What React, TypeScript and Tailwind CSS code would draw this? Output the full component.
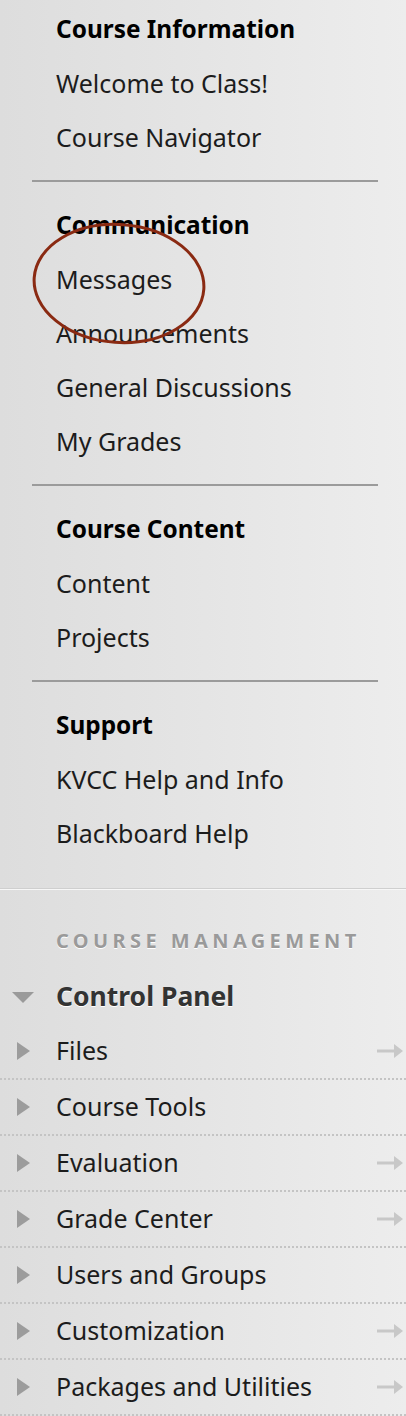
const sections = [
  { title: 'Course Information', items: ['Welcome to Class!', 'Course Navigator'] },
  { title: 'Communication', items: ['Messages', 'Announcements', 'General Discussions', 'My Grades'] },
  { title: 'Course Content', items: ['Content', 'Projects'] },
  { title: 'Support', items: ['KVCC Help and Info', 'Blackboard Help'] },
];

const panelRows = [
  { label: 'Files', arrow: true },
  { label: 'Course Tools', arrow: false },
  { label: 'Evaluation', arrow: true },
  { label: 'Grade Center', arrow: true },
  { label: 'Users and Groups', arrow: false },
  { label: 'Customization', arrow: true },
  { label: 'Packages and Utilities', arrow: true },
];

function RightArrow() {
  return (
    <svg width="26" height="14" viewBox="0 0 26 14" className="mr-[3px]">
      <line x1="0" y1="7" x2="19" y2="7" stroke="#c8c8c8" strokeWidth="3" />
      <polygon points="17,0 26,7 17,14" fill="#c8c8c8" />
    </svg>
  );
}

export default function App() {
  return (
    <div
      className="relative w-[406px] h-[1416px] overflow-hidden bg-gradient-to-r from-[#dddddd] to-[#ededed]"
      style={{ fontFamily: '"Noto Sans", "DejaVu Sans", sans-serif' }}
    >
      <div className="pt-[2px]">
        {sections.map((s, i) => (
          <div key={s.title}>
            {i > 0 && <div className="ml-8 mr-[28px] my-4 h-[2px] bg-[#9b9b9b]" />}
            <div className="pl-[56px]">
              <div className="h-[54px] leading-[54px] text-[24.4px] font-bold text-black">{s.title}</div>
              {s.items.map((it) => (
                <div key={it} className="h-[54px] leading-[54px] text-[25px] text-[#1c1c1c]">
                  {it}
                </div>
              ))}
            </div>
          </div>
        ))}
      </div>

      <div className="mt-[28px] h-[1px] bg-[#cfcfcf]" />
      <div className="border-t border-[#f7f7f7]" />

      <div className="pl-[56px] pt-[36px] h-[80px] text-[20px] font-bold tracking-[4.4px] text-[#9a9a9a] [text-shadow:0_1px_0_#fff]">
        COURSE MANAGEMENT
      </div>

      <div className="flex items-center h-[54px]">
        <div className="w-[56px] pl-[12px]">
          <div className="w-0 h-0 border-l-[11px] border-r-[11px] border-t-[11px] border-l-transparent border-r-transparent border-t-[#9a9a9a]" />
        </div>
        <div className="text-[26.5px] font-bold text-[#333] [text-shadow:0_1px_0_#fff]">Control Panel</div>
      </div>

      {panelRows.map((r) => (
        <div key={r.label} className="flex items-center h-[56px] border-b-2 border-dotted border-[#c4c4c4]">
          <div className="w-[56px] pl-[17px]">
            <div className="w-0 h-0 border-t-[9px] border-b-[9px] border-l-[13px] border-t-transparent border-b-transparent border-l-[#9c9c9c]" />
          </div>
          <div className="flex-1 text-[25px] text-[#1c1c1c]">{r.label}</div>
          {r.arrow && <RightArrow />}
        </div>
      ))}

      <svg
        className="absolute left-[30px] top-[220px]"
        width="178"
        height="127"
        viewBox="0 0 178 127"
      >
        <ellipse
          cx="89"
          cy="63.5"
          rx="85"
          ry="59"
          fill="none"
          stroke="#8a2a12"
          strokeWidth="3"
          transform="rotate(4 89 63.5)"
        />
      </svg>
    </div>
  );
}
